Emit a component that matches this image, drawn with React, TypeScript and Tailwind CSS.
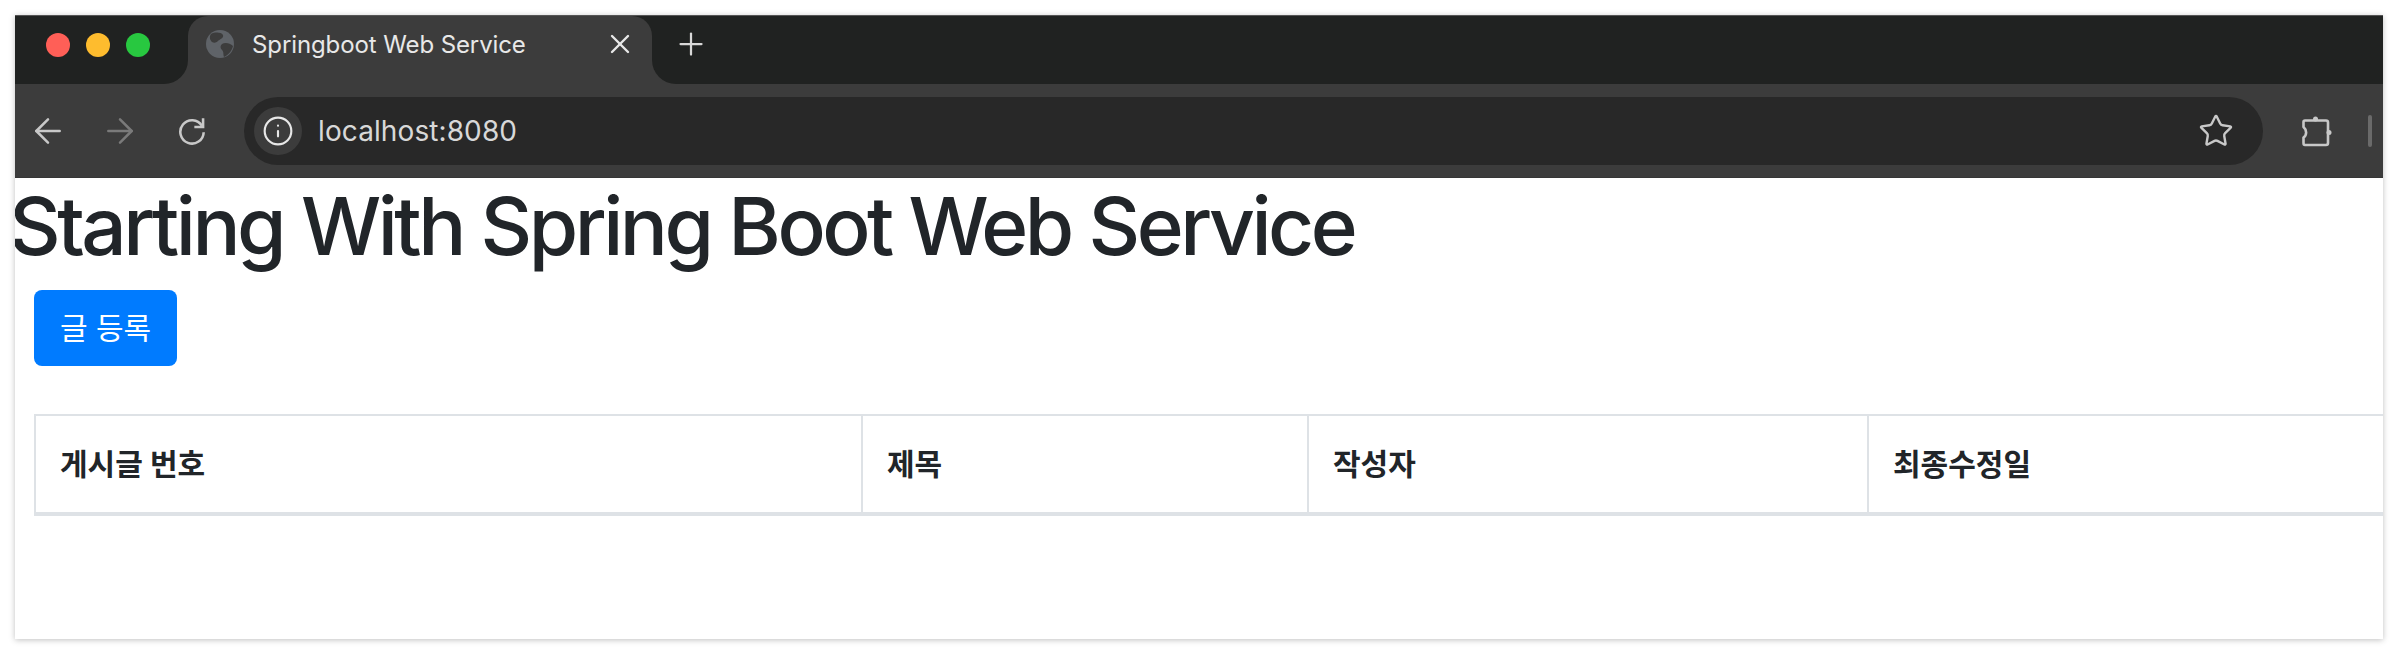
import { ArrowLeft, ArrowRight, Info, Star, X, Plus } from "lucide-react";

const HEADERS = [
  { label: "게시글 번호", width: "w-[827px]" },
  { label: "제목", width: "w-[446px]" },
  { label: "작성자", width: "w-[560px]" },
  { label: "최종수정일", width: "w-[561px]" },
];

function Globe() {
  return (
    <svg className="w-7 h-7 shrink-0" viewBox="0 0 28 28">
      <circle cx="14" cy="14" r="14" fill="#5f6368" />
      <path d="M5 4 C9 2 15 2 17 5 C18 8 14 9 12 11 C10 13 8 13 6 12 C4 10 3 7 5 4Z" fill="#3c3c3c" />
      <path d="M16 14 C19 12 24 13 27 16 C26 21 22 25 18 27 C17 24 18 22 16 20 C14 18 14 16 16 14Z" fill="#3c3c3c" />
    </svg>
  );
}

function TabStrip() {
  return (
    <div className="flex h-[69px] bg-[#202221] border-t border-[#555]">
      <div className="w-[173px] bg-[#3c3c3c]">
        <div className="h-full bg-[#202221] rounded-br-[24px] flex items-start pt-[17px] pl-[31px] gap-[16px]">
          <span className="w-6 h-6 rounded-full bg-[#ff5f57]" />
          <span className="w-6 h-6 rounded-full bg-[#febc2e]" />
          <span className="w-6 h-6 rounded-full bg-[#28c840]" />
        </div>
      </div>
      <div className="w-[464px] bg-[#202221]">
        <div className="h-full bg-[#3c3c3c] rounded-t-[20px] flex items-start pt-[14px] pl-[18px] pr-[16px]">
          <Globe />
          <span className="ml-[18px] text-[24px] leading-[29px] tracking-[-0.1px] text-[#e8e8e8] whitespace-nowrap">Springboot Web Service</span>
          <X className="ml-auto -mt-[2px] w-8 h-8 text-[#e8e8e8]" strokeWidth={1.8} />
        </div>
      </div>
      <div className="flex-1 bg-[#3c3c3c]">
        <div className="h-full bg-[#202221] rounded-bl-[24px] pl-[21px] pt-[10px]">
          <Plus className="w-9 h-9 text-[#d8d8d8]" strokeWidth={1.5} />
        </div>
      </div>
    </div>
  );
}

function Toolbar() {
  return (
    <div className="flex items-center h-[94px] bg-[#3c3c3c] border-b border-[#363636] pl-[13px]">
      <ArrowLeft className="w-10 h-10 text-[#c8c8c8]" strokeWidth={1.5} />
      <ArrowRight className="w-10 h-10 ml-8 text-[#7a7a7a]" strokeWidth={1.5} />
      <svg className="w-7 h-7 ml-[38px]" viewBox="0 0 24 24" fill="none" stroke="#c8c8c8" strokeWidth="2.2">
        <path d="M20.5 7.500 A10 10 0 1 0 22 13" />
        <path d="M21.500 1 V8.500 H14" />
      </svg>
      <div className="ml-[38px] w-[2019px] h-[68px] rounded-full bg-[#282828] flex items-center pl-[10px] pr-[29px]">
        <div className="w-[48px] h-[48px] rounded-full bg-[#3c3c3c] flex items-center justify-center">
          <Info className="w-8 h-8 text-[#e8e8e8]" strokeWidth={1.6} />
        </div>
        <span className="ml-[16px] text-[28px] text-[#d8d8d8] tracking-[0.1px]">localhost:8080</span>
        <Star className="ml-auto w-9 h-9 text-[#c8c8c8]" strokeWidth={1.6} />
      </div>
      <svg className="ml-[37px] w-8 h-8" viewBox="0 0 32 32" fill="none" stroke="#c8c8c8" strokeWidth="2.6" strokeLinejoin="round">
        <path d="M5 5.500 H26 Q28 5.500 28 7.500 V28 Q28 30 26 30 H5 Q3.500 30 3.500 28 V22.500 C7 20 7 15 3.500 12 V7 Q3.500 5.500 5 5.500Z" />
        <circle cx="15.500" cy="4" r="2.500" fill="#c8c8c8" stroke="none" />
        <circle cx="29" cy="17.500" r="2.500" fill="#c8c8c8" stroke="none" />
      </svg>
      <span className="ml-[36px] w-1 h-8 rounded-full bg-[#6a6a6a]" />
    </div>
  );
}

export default function App() {
  return (
    <div className="h-[654px] bg-white p-[15px] font-['Inter','Noto_Sans_CJK_KR',sans-serif]">
      <div className="h-[624px] bg-white overflow-hidden shadow-[0_1px_6px_rgba(0,0,0,0.25)]">
        <TabStrip />
        <Toolbar />
        <h1 className="-ml-[6px] mb-4 text-[80px] leading-[96px] font-medium tracking-[-3.5px] text-[#212529] whitespace-nowrap">
          Starting With Spring Boot Web Service
        </h1>
        <div className="pl-[19px]">
          <button className="h-[76px] w-[143px] rounded-lg bg-[#007bff] text-[30px] text-white">글 등록</button>
          <table className="mt-12 table-fixed border-separate border-spacing-0 w-[2394px]">
            <thead>
              <tr>
                {HEADERS.map((h) => (
                  <th
                    key={h.label}
                    className={`${h.width} h-[102px] border-t-2 border-b-4 border-l-2 border-[#dee2e6] pl-[24px] text-left text-[30px] font-bold text-[#212529]`}
                  >
                    {h.label}
                  </th>
                ))}
              </tr>
            </thead>
          </table>
        </div>
      </div>
    </div>
  );
}
